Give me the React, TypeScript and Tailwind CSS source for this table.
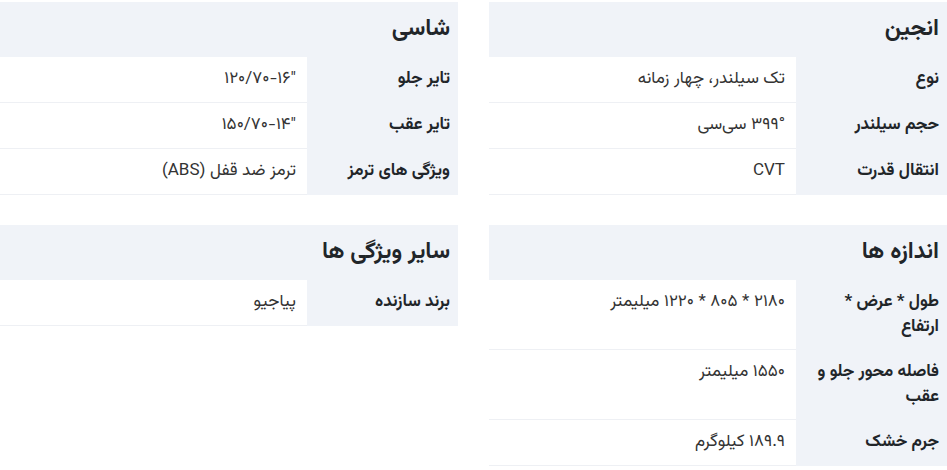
const sections = [
  {
    title: "انجین",
    rows: [
      ["نوع", "تک سیلندر، چهار زمانه"],
      ["حجم سیلندر", "۳۹۹° سی‌سی"],
      ["انتقال قدرت", "CVT"],
    ],
  },
  {
    title: "شاسی",
    rows: [
      ["تایر جلو", "\"۱۲۰/۷۰-۱۶"],
      ["تایر عقب", "\"۱۵۰/۷۰-۱۴"],
      ["ویژگی های ترمز", "ترمز ضد قفل (ABS)"],
    ],
  },
  {
    title: "اندازه ها",
    rows: [
      ["طول * عرض * ارتفاع", "۲۱۸۰ * ۸۰۵ * ۱۲۲۰ میلیمتر"],
      ["فاصله محور جلو و عقب", "۱۵۵۰ میلیمتر"],
      ["جرم خشک", "۱۸۹.۹ کیلوگرم"],
    ],
  },
  {
    title: "سایر ویژگی ها",
    rows: [["برند سازنده", "پیاجیو"]],
  },
];

const SpecTable = ({ title, rows }: { title: string; rows: string[][] }) => {
  return (
    <div className="flex flex-col">
      <div className="h-[55px] bg-[#f0f3f8] px-2 flex items-center text-[23px] font-bold text-[#212529]">
        {title}
      </div>
      {rows.map(([label, value]) => (
        <div key={label} className="flex">
          <div className="w-[151px] shrink-0 bg-[#f0f3f8] px-2 py-[10px] leading-[25px] text-[17px] font-bold text-[#212529]">
            {label}
          </div>
          <div className="flex-1 px-[11px] py-[10px] leading-[25px] text-[17px] text-[#333] border-b border-[#eef0f4]">
            {value}
          </div>
        </div>
      ))}
    </div>
  );
};

export default function App() {
  return (
    <div
      dir="rtl"
      className="w-[947px] pt-[2px] bg-white grid grid-cols-2 gap-x-[31px] gap-y-[30px] items-start"
      style={{ fontFamily: '"Vazirmatn", "Noto Sans Arabic", "DejaVu Sans", sans-serif' }}
    >
      {sections.map((s) => (
        <SpecTable key={s.title} title={s.title} rows={s.rows} />
      ))}
    </div>
  );
}
